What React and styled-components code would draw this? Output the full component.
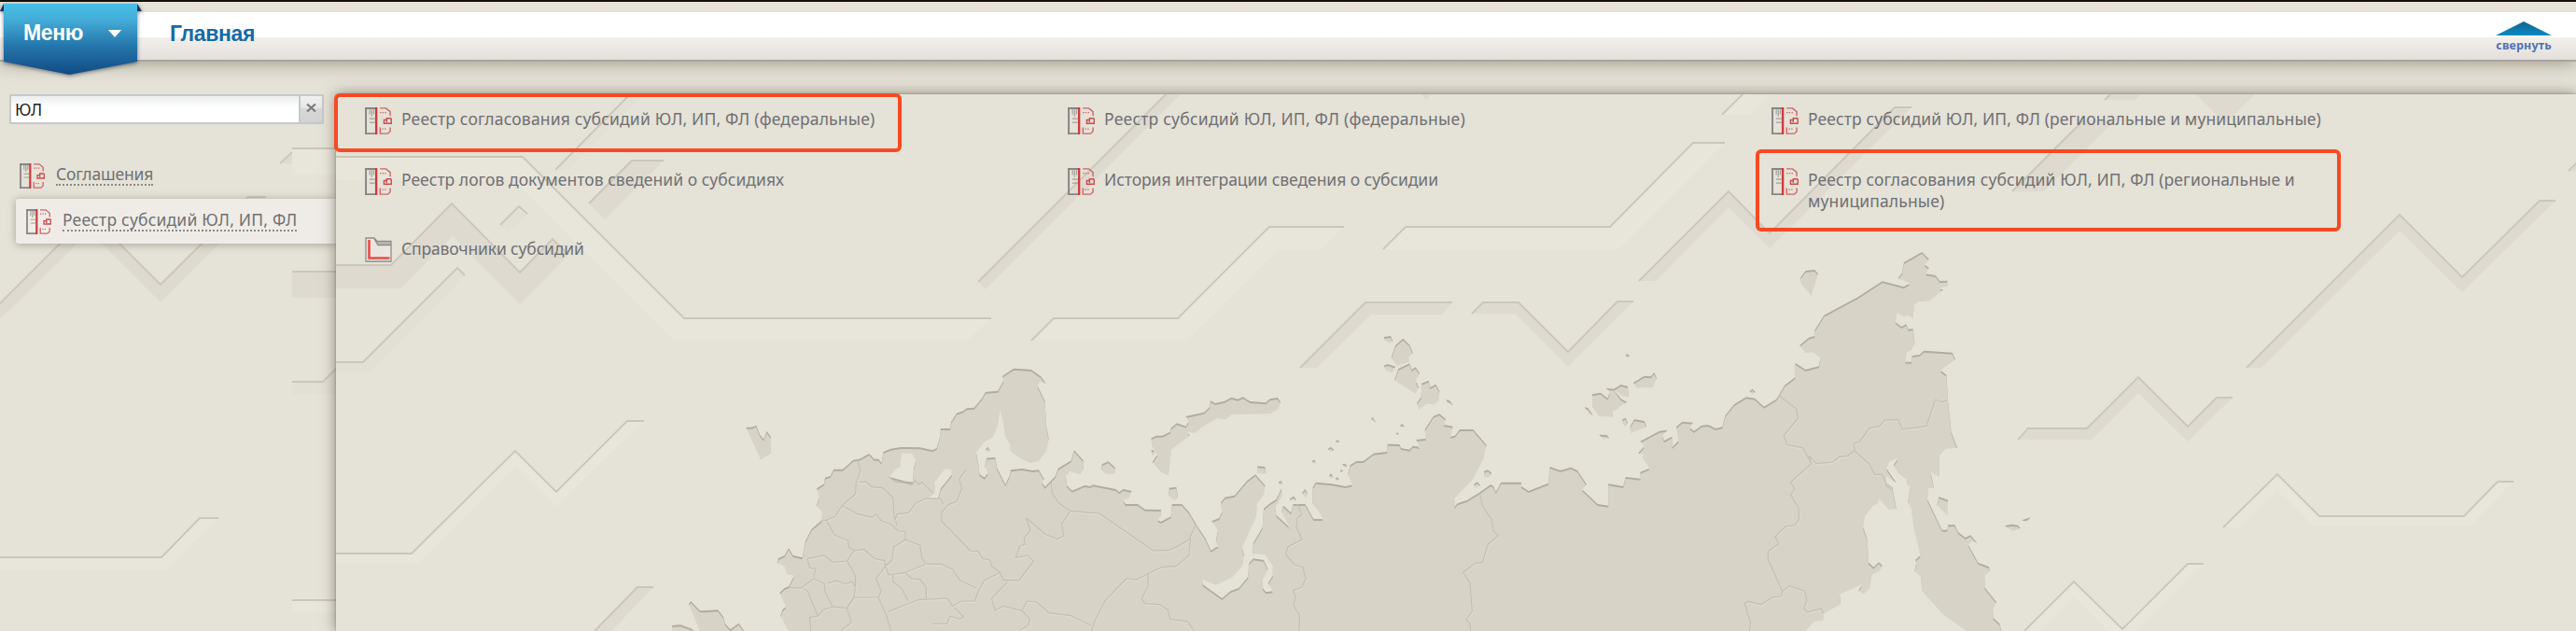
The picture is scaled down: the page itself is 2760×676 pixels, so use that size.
import React from "react";
import styled, { createGlobalStyle } from "styled-components";

const color = {
  page: "#e5e2d7",
  bandDark: "#dedad0",
  bandLight: "#e8e5da",
  line: "#cbc6ba",
  land: "#d7d3c7",
  text: "#6f7073",
  accent: "#f64a24",
  link: "#156ba5",
};

const GlobalStyle = createGlobalStyle`
  * { box-sizing: border-box; }
  html, body { margin: 0; background: ${color.page}; }
  body { overflow: hidden; }
`;

/* ---------- landscape data ---------- */

// Each map sheet has its own origin and horizontal/vertical scale.
const sheet = (x0, y0, sx, sy) => (points) =>
  points
    .trim()
    .split(/\s+/)
    .map((pair) => {
      const [x, y] = pair.split(",").map(Number);
      return `${(x0 + x / sx).toFixed(1)},${(y0 + y / sy).toFixed(1)}`;
    })
    .join(" ");

const west = sheet(700, 340, 2.24, 3);
const centre = sheet(1340, 340, 3, 3);
const east = sheet(1680, 240, 2.8, 3);

const mainland = [
  west(`325,1020 325,1008 305,960 310,940 318,930 303,885 315,870 325,865 338,830 320,825 315,800 297,790 300,775 315,765 325,742 335,765 358,772
    365,720 380,680 405,652 405,625 392,605 398,580 392,550 410,535 412,515 425,510 433,488 455,488 480,458 495,455 518,438
    530,455 540,455 548,468 552,432 570,422 595,417 640,418 670,427 680,420 688,385 690,357 712,357 715,335 728,308 745,300 752,292 770,290
    790,258 797,240 827,236 840,205 838,188 865,164 907,168 930,190 942,212 928,207 922,220 940,270 943,350 949,390
    943,430 925,462 905,468 880,452 858,432 855,405 845,385 840,340 832,295 826,350 815,385 795,400 775,435 780,470
    783,505 795,515 803,500 796,480 800,452 820,450 825,485 845,537 855,510 858,490 885,486 910,492 925,490 938,520
    933,530 940,545 965,510 972,485 1003,460 1010,427 1032,460 1032,488 1025,505 1000,495 990,510 992,540 1005,557
    1035,540 1048,543 1055,538 1110,552 1118,562 1128,552 1148,558 1142,580 1128,588 1133,600 1162,600 1180,617 1218,618
    1218,640 1210,650 1218,657 1242,640 1245,600 1268,600 1285,625 1303,665 1325,710 1338,750 1355,735 1350,720 1355,685
    1340,655 1358,645 1365,625 1362,595 1372,578 1395,572 1425,525 1445,505 1468,540 1465,570 1448,600 1447,640 1430,690
    1413,740 1418,765 1413,800 1390,835 1350,860 1318,842 1318,858 1365,903 1385,880 1405,870 1427,835 1430,790 1440,775
    1465,780 1475,810 1462,845 1462,870 1470,883 1487,880 1475,855 1487,830 1487,800 1468,763 1438,760 1440,725 1462,675
    1465,615 1480,598 1495,585 1508,550`),
  centre(`100,575 80,610 82,635 125,675 100,625 105,605 130,628 137,600 175,600 202,648 232,648 225,632 198,598 200,545 210,530 260,535
    305,543 327,538 313,505 320,475 340,462 362,462 395,437 438,432 440,407 478,408 483,420 510,425 522,413 543,417
    532,393 563,390 560,360 588,317 607,310 627,327 620,345 650,350 642,383 657,380 672,360 715,360 758,410 748,455
    715,520 655,582 655,610 665,598 695,588 735,563 772,537 780,543 788,562 805,530 870,530 870,543 893,558 957,533 962,480
    995,492 1030,482 1050,492 1080,537 1065,553 1115,600 1150,605 1150,535 1198,543 1205,513 1253,518 1252,497 1282,485
    1262,455 1262,440 1245,437 1265,415`),
  east(`217,698 275,665 298,662 283,680 288,697 312,683 313,717 332,697 325,652 343,635 375,638 365,655 378,665 388,658
    400,648 420,645 443,657 463,652 472,615 498,580 535,556 560,560 588,587 625,563 633,550 650,518 682,492 682,447
    713,468 753,457 757,430 735,412 713,415 695,390 722,365 740,360 740,342 768,293 870,235 943,184 1008,202 1025,190
    990,175 1003,155 1008,123 1062,90 1083,113 1070,130 1083,142 1073,160 1103,165 1115,183 1138,182 1138,200 1115,205
    1125,212 1085,247 1050,250 1038,262 1035,303 1020,293 1010,298 987,285 982,315 1000,330 1015,322 1020,338 1035,337 1040,385
    1030,405 1015,412 1012,443 1030,443 1033,423 1055,420 1068,407 1153,413 1162,435 1118,470 1135,485 1140,570 1150,670
    1168,720 1133,722 1115,745 1113,812 1088,797 1097,848 1080,850 1078,885 1122,983 1138,983 1140,967 1160,967 1170,990
    1192,1008 1208,1000 1228,1027 1215,1018 1200,1030 1230,1088 1263,1102 1265,1115 1250,1130 1250,1168 1285,1215 1275,1240
    1275,1265 1295,1285 1302,1320 1195,1320 1195,1308 1125,1255 1062,1180 1058,1135 1040,1115 1045,1090 1042,1080 1057,1065 1038,980 1030,915
    1020,895 1027,843 1017,840 1015,820 990,800 977,775 990,752 965,762 955,785 985,832 965,818 955,810 953,835 973,850 985,915 962,918 933,882 928,900 915,905 890,940
    885,975 897,1010 902,1088 917,1103 932,1087 943,1097 935,1115 912,1127 905,1170 887,1190 872,1178 882,1158 815,1190 818,1222
    768,1252 765,1275 740,1277 712,1308 712,1320`),
].join(" ");

const islands = [
  west("222,353 237,353 247,347 256,378 265,392 272,366 282,383 281,438 258,458"),
  west("1195,388 1208,380 1222,380 1240,368 1243,355 1257,340 1278,350 1285,335 1278,318 1322,305 1335,288 1337,268 1348,276 1370,270 1388,257 1403,263 1415,256 1432,270 1470,274 1480,262 1498,258 1505,272 1500,295 1480,310 1388,312 1375,328 1352,325 1318,352 1300,372 1283,368 1287,380 1243,425 1236,508 1218,498 1198,465 1210,440 1197,415"),
  west("1195,427 1203,427 1203,440 1197,445"),
  west("1077,472 1092,463 1108,482 1107,503 1085,503 1075,488"),
  west("797,425 803,416 808,428 803,433"),
  west("1238,548 1255,545 1259,580 1250,588 1237,572"),
  west("1450,478 1468,480 1470,503 1450,500"),
  west("1500,530 1506,525 1510,534 1505,539"),
  west("1526,588 1538,575 1542,588"),
  west("45,990 65,988 90,1000 110,1020 45,1020"),
  west("85,922 90,912 112,943 155,940 168,962 172,985 185,1003 205,983 218,1008 218,1020 115,1020 97,960"),
  centre("428,63 450,60 457,78 445,82 430,73"),
  centre("465,90 490,68 510,88 522,115 508,128 508,143 470,155 452,130"),
  centre("428,155 440,150 465,158 455,178 435,170"),
  centre("475,165 510,148 518,168 530,160 543,180 530,205 540,225 530,245 462,202"),
  centre("550,212 572,203 577,225 595,215 607,238 605,265 590,280 565,278 540,297 535,275 548,255"),
  centre("627,265 640,268 650,282 635,277"),
  centre("387,328 393,320 402,338"),
  centre("480,348 487,342 494,350 486,355"),
  centre("467,373 472,370 476,375 471,379"),
  centre("248,423 257,416 268,426 258,432"),
  centre("273,398 279,394 285,400 279,404"),
  centre("197,463 203,457 209,465 203,470"),
  centre("295,472 303,470 310,478 302,483"),
  centre("252,508 259,502 265,512 257,518"),
  centre("287,493 292,489 297,494 291,498"),
  centre("272,518 278,514 284,521 278,525"),
  centre("125,583 138,575 147,588"),
  centre("165,565 175,552 182,565 178,582"),
  centre("750,495 762,490 775,500 765,515 752,512"),
  centre("717,537 728,528 738,540 722,550"),
  centre("1205,122 1212,117 1218,125 1211,131"),
  centre("1230,210 1265,188 1287,190 1297,177 1305,195 1293,225 1240,227"),
  centre("1098,247 1125,242 1147,260 1155,240 1142,228 1168,230 1190,216 1212,222 1214,255 1195,253 1170,235 1190,262 1210,272 1190,285 1175,298 1163,300 1163,320 1120,318 1100,290"),
  centre("1073,288 1085,292 1100,315 1085,308"),
  centre("1195,328 1205,323 1212,340 1205,352 1196,342"),
  centre("1220,350 1233,328 1265,333 1272,352 1222,372"),
  centre("1120,377 1145,378 1152,388 1135,392"),
  east("698,172 713,150 740,147 750,160 730,230 700,193"),
  east("545,538 553,530 562,540 553,547"),
  east("1113,877 1140,887 1137,937 1107,903"),
  east("1310,970 1330,965 1350,968 1357,978 1335,987"),
  east("1362,952 1388,943 1375,958"),
];

const lakes = [
  west("595,437 620,437 630,460 625,487 623,530 605,527 567,513 580,490 592,480"),
  west("675,530 700,487 715,490 717,505 690,550 683,583 660,582 675,565"),
];

const borders = [
  west("490,455 497,495 487,530 485,568 453,605 437,640 415,652 405,652"),
  west("495,530 510,528 525,545 550,548 575,580 578,640 585,670"),
  west("453,605 490,632 525,643 535,633 548,655 570,665 588,687 605,688 605,715 577,738 573,780 557,800"),
  west("565,513 582,530 605,533 620,540 628,525 638,538 645,530 670,565"),
  west("750,490 735,520 740,552 728,592 708,602 692,628 692,655 760,750 780,752 790,775 808,780 812,800 832,820"),
  west("695,600 690,583 655,582 630,597 613,628 585,632 580,650"),
  west("415,652 435,700 467,718 470,740 482,750 465,783 430,787 410,765 370,775 375,805 390,808 385,835"),
  west("482,750 505,745 530,775 555,782 557,800 565,828 605,820 655,793 690,793 718,810 735,845 775,870"),
  west("605,715 640,733 645,775 655,793"),
  west("385,840 410,855 413,885 430,930 408,940 395,960 370,880 355,870 325,868"),
  west("385,840 355,870"),
  west("418,855 440,847 460,857 478,850 485,868 482,900 465,935 430,930"),
  west("465,783 485,830 485,868"),
  west("557,800 535,840 547,880 540,900 482,900 465,935 475,980 450,1008"),
  west("540,900 560,960 570,1008"),
  west("575,828 575,850 595,870 612,912"),
  west("605,822 620,840 640,842 655,870 655,903"),
  west("565,945 635,908 705,903 718,928 745,963 735,970 712,960 705,985 670,985"),
  west("718,928 740,912 772,912 780,880 795,845 832,820"),
  west("395,960 375,965 378,1008"),
  west("832,820 840,845 878,845 912,785 900,765 870,772 880,735 892,730 890,710 905,685 895,645 940,697 970,713 985,702 980,665 1000,625"),
  west("955,528 957,565 975,600 1000,622 1070,630 1200,750 1240,748 1260,735 1285,715 1303,665"),
  west("1290,710 1285,765 1255,800 1220,803 1190,822 1160,843 1135,840 1085,910 1060,975 1052,1008"),
  west("850,850 812,905 820,942 840,928 885,943 897,912 920,915 950,950 1000,958 1050,990"),
  west("1188,822 1187,865 1172,905 1180,920 1215,923 1235,940 1240,970 1283,978 1297,1008"),
  west("885,943 903,970 900,990 880,1005"),
  centre("150,600 165,635 150,645 147,675 165,715 120,737 113,762 140,795 168,803 177,840 165,867 137,878 145,903 137,925 158,960 155,1008"),
  centre("735,563 747,610 775,650 780,685 795,703 763,730 745,788 722,790 683,820 705,853 712,945 693,972 705,985 707,1008"),
  east("633,552 685,595 690,625 648,680 657,710 705,720 730,770 668,830 680,852 668,870 692,915 693,950 680,968 652,972 622,1005 632,1028 600,1052 600,1078 643,1180"),
  east("730,770 722,745 745,770 795,765 815,748 840,745 860,728 858,705 875,700 905,655 935,650 950,630 990,628 1003,660 1075,650 1102,565 1120,572 1140,567"),
  east("860,730 903,770 920,805 942,805 955,835 975,850"),
  east("530,1220 540,1213 580,1223 612,1200 640,1197 643,1180 665,1163 710,1180 717,1210 707,1235 718,1248 760,1235 765,1252"),
  east("530,1220 548,1280 545,1308"),
];

// crest: the engraved top edge; base: the lower edge, listed right to left.
const panelRidges = [
  { light: true, crest: "360,168 560,168 733,341 1062,341", base: "1036,365 722,365 550,193 360,193" },
  { crest: "360,284 419,284 484,218 557,292 592,256 609,273", base: "557,326 485,253 429,309 360,309" },
  { faint: true, crest: "536,241 556,221 565,229", base: "545,249" },
  { faint: true, crest: "360,388 389,388 490,287 498,295", base: "395,399 360,399" },
  { faint: true, crest: "595,182 675,101", base: "689,101 608,182" },
  { crest: "631,218 677,172 711,172", base: "648,235" },
  { crest: "1048,302 1249,101", base: "1265,101 1056,310" },
  { light: true, crest: "1105,365 1129,341 1262,341 1360,243 1440,243", base: "1416,267 1371,267 1272,365" },
  { light: true, crest: "1482,267 1506,243 1725,243 1814,153 1848,153", base: "1735,267" },
  { light: true, crest: "1845,123 1867,101", base: "1898,101 1875,123" },
  { crest: "1393,394 1463,324 1556,324", base: "1545,337 1469,337 1411,394" },
  { crest: "1577,336 1589,324 1627,324 1680,377 1733,323 1750,323", base: "1680,393 1623,336" },
  { crest: "1756,301 1852,205 1896,250 2030,115 2048,115", base: "1896,266 1852,222 1774,301" },
  { crest: "2156,205 2232,129", base: "2266,129 2190,205" },
  { crest: "2255,107 2261,101", base: "2294,101 2287,107" },
  { crest: "", base: "2353,101 2416,101 2384,132" },
  { crest: "", base: "1523,101 1534,101 1528,107" },
  { crest: "2407,394 2571,230 2638,297 2721,215 2738,215", base: "2638,313 2571,247 2423,394" },
  { crest: "2162,471 2173,459 2236,459 2291,404 2344,457 2375,426 2392,426", base: "2344,473 2291,421 2241,471" },
  { light: true, crest: "2382,565 2440,508 2485,553 2640,553 2676,516 2693,516", base: "2647,564 2479,564 2440,525 2400,565" },
  { light: true, crest: "2169,676 2222,623 2274,674 2344,604 2361,604", base: "2289,676 2260,676 2222,640 2186,676" },
  { crest: "2752,183 2762,173", base: "2762,183" },
  { light: true, crest: "360,593 441,593 552,483 596,527 672,451 690,451", base: "596,543 552,500 448,604 360,604" },
  { crest: "637,676 683,629 700,629", base: "655,676" },
];

const sidebarRidges = [
  { crest: "0,325 96,229 172,305 266,211 285,211", base: "172,324 96,248 0,342" },
  { crest: "300,175 313,163", base: "313,175" },
  { light: true, crest: "313,159 362,159", base: "362,187 313,187" },
  { crest: "313,291 362,291", base: "362,319 313,319" },
  { faint: true, crest: "313,409 346,409 362,393", base: "362,422 313,422" },
  { light: true, crest: "0,597 173,597 214,555 234,555", base: "180,610 0,610" },
  { light: true, crest: "313,643 362,643", base: "362,656 313,656" },
];

const ridgeFill = ({ light, faint }) =>
  light ? color.bandLight : faint ? "#e2dfd4" : color.bandDark;

const Ridges = ({ items }) =>
  items.map((ridge, i) => (
    <g key={i}>
      <polygon points={`${ridge.crest} ${ridge.base}`} fill={ridgeFill(ridge)} />
      {ridge.crest && (
        <polyline points={ridge.crest} fill="none" stroke={color.line} strokeWidth="1.8" />
      )}
    </g>
  ));

/* ---------- header ---------- */

const Page = styled.div`
  display: flex;
  flex-direction: column;
  width: 2760px;
  height: 676px;
  overflow: hidden;
  background: ${color.page};
  font-family: "Noto Sans", "Open Sans", sans-serif;
`;

const Header = styled.header`
  position: relative;
  z-index: 2;
  flex: none;
  display: flex;
  align-items: flex-start;
  height: 66px;
  border-top: 2px solid #12100e;
  background: linear-gradient(
    #e7e3d8 0, #e4e1d6 11px, #fff 11px, #fff 38px,
    #f3efeb 38px, #e3dfdb 62px, #a9a6a0 62px, #a9a6a0 64px
  );
  box-shadow: 0 2px 18px rgba(90, 84, 66, 0.5);
`;

const MenuButton = styled.button`
  position: relative;
  flex: none;
  display: flex;
  align-items: center;
  width: 152px;
  height: 78px;
  margin-top: 1px;
  padding: 0 0 13px 25px;
  border: 0;
  background: none;
  color: #fff;
  font: bold 23px "Liberation Sans", Arial, sans-serif;
  letter-spacing: -0.35px;
  text-align: left;
`;

const MenuShape = styled.svg`
  position: absolute;
  left: 0;
  top: 0;
  filter: drop-shadow(0 1px 2px rgba(30, 40, 60, 0.6));
`;

const MenuLabel = styled.span`
  position: relative;
  width: 91px;
`;

const Caret = styled.span`
  position: relative;
  border: 7px solid transparent;
  border-top: 8px solid #fff;
  border-bottom: 0;
`;

const PageTitle = styled.h1`
  margin: 20px 0 0 30px;
  color: ${color.link};
  font: bold 23px/28px "Liberation Sans", Arial, sans-serif;
  letter-spacing: -0.35px;
`;

const Collapse = styled.button`
  display: flex;
  flex-direction: column;
  align-items: center;
  gap: 3px;
  width: 62px;
  margin: 21px 25px 0 auto;
  padding: 0;
  border: 0;
  background: none;
  color: #4b73b4;
  font: bold 12.5px/16px "Noto Sans", sans-serif;
  letter-spacing: 0.15px;
`;

/* ---------- layout ---------- */

const Body = styled.div`
  flex: 1;
  display: grid;
  grid-template-columns: 360px 1fr;
`;

const Backdrop = styled.svg`
  position: absolute;
  left: 0;
  top: 0;
  display: block;
`;

const Sidebar = styled.aside`
  position: relative;
  padding-top: 35px;
`;

const SidebarContent = styled.div`
  position: relative;
`;

const Panel = styled.main`
  position: relative;
  margin-top: 35px;
  background: ${color.page};
  box-shadow: 0 0 14px rgba(70, 64, 46, 0.6), 0 0 2px rgba(70, 64, 46, 0.4);
`;

/* ---------- search ---------- */

const Search = styled.div`
  display: flex;
  width: 337px;
  height: 32px;
  margin-left: 10px;
  border: 2px solid #c6c8cb;
`;

const SearchInput = styled.input`
  flex: 1;
  min-width: 0;
  padding: 0 0 0 4px;
  border: 0;
  outline: 0;
  background: linear-gradient(#eceeef, #fff 12px);
  color: #222;
  font: 17.5px "Noto Sans", sans-serif;
  letter-spacing: -0.3px;
`;

const ClearButton = styled.button`
  display: flex;
  align-items: center;
  justify-content: center;
  width: 25px;
  padding: 0 0 3px;
  border: 0;
  border-left: 2px solid #c6c8cb;
  background: linear-gradient(#f1f1f1 0, #e6e6e6 45%, #d8d8d8 46%, #d2d2d2);
`;

/* ---------- navigation ---------- */

const Nav = styled.nav`
  margin-top: 31px;
`;

const NavItem = styled.a`
  display: flex;
  align-items: center;
  gap: 12px;
  height: ${(p) => (p.$active ? 48 : 49)}px;
  margin-left: ${(p) => (p.$active ? 17 : 10)}px;
  padding-left: 11px;
  border-radius: 3px 0 0 3px;
  background: ${(p) => (p.$active ? "#efece7" : "transparent")};
  box-shadow: ${(p) => (p.$active ? "0 1px 8px rgba(90, 84, 66, 0.45)" : "none")};
`;

const NavLabel = styled.span`
  margin-bottom: 4px;
  padding-top: 2px;
  border-bottom: 2px dotted #8b8a86;
  color: ${color.text};
  font-size: 17.5px;
  line-height: 21px;
  letter-spacing: ${(p) => p.$track}px;
`;

/* ---------- link grid ---------- */

const LinkGrid = styled.div`
  position: relative;
  display: grid;
  grid-template-columns: 753px 754px 1fr;
  grid-template-rows: 65px 74px auto;
  padding: 14px 0 0 31px;
`;

const LinkItem = styled.a`
  position: relative;
  display: flex;
  align-items: flex-start;
  gap: 10px;
`;

const LinkText = styled.span`
  padding-top: 1px;
  color: ${color.text};
  font-size: 17.5px;
  line-height: 23px;
  letter-spacing: ${(p) => p.$track}px;
  white-space: pre-line;
`;

const Highlight = styled.span`
  position: absolute;
  left: ${(p) => p.$left}px;
  top: ${(p) => p.$top}px;
  width: ${(p) => p.$width}px;
  height: ${(p) => p.$height}px;
  border: 4px solid ${color.accent};
  border-radius: 6px;
`;

/* ---------- icons ---------- */

const RegistryIcon = ({ size = 29 }) => (
  <svg width={size} height={size} viewBox="0 0 27 27" fill="none">
    <path d="M1 0V27M0 1H11M0 26.200H11" stroke="#868583" strokeWidth="1.8" />
    <path d="M4.800 2v5M6.800 2v7M8.800 2v5M4.500 11.300h5.500M4.500 15h5.500" stroke="#a09f9b" strokeWidth="1.1" />
    <path d="M11.3 0v27" stroke="#cf383f" strokeWidth="2.2" />
    <path d="M15 0.800h6l4.200 3.500v4.200" stroke="#cf6468" strokeWidth="1.3" />
    <path d="M15 5.200h6.500" stroke="#cf6468" strokeWidth="1.2" strokeDasharray="1.300 1.200" />
    <path d="M26.300 11h-4.600v4M26.300 11v5h-7.300v-3.400h2.500" stroke="#cb4a50" strokeWidth="1.3" />
    <path d="M15.200 20v6.200h7.600l2.400-2.200v-4" stroke="#cf6468" strokeWidth="1.3" />
    <path d="M17.200 21.500h5" stroke="#cf6468" strokeWidth="1.2" strokeDasharray="1.300 1.200" />
  </svg>
);

const FolderIcon = () => (
  <svg width="29" height="27" viewBox="0 0 29 27" fill="none">
    <path d="M1 1h9l4 7h14v18H1z" fill="#e9e7e0" />
    <path d="M10 1.5l3 3.5h15v4H14z" fill="#bbbab7" />
    <path d="M1 1h9l3 3.5h15V26H1zM10 2l4 6.5h14" stroke="#8f8e8b" strokeWidth="1.3" />
    <path d="M4.5 3v19.500h22" stroke="#ec4b49" strokeWidth="2.6" />
  </svg>
);

const ClearIcon = () => (
  <svg width="11" height="11" viewBox="0 0 11 11">
    <path d="M1 1.500l9 8M10 1.500l-9 8" stroke="#7b7b7b" strokeWidth="2.300" />
  </svg>
);

/* ---------- content ---------- */

const links = [
  {
    text: "Реестр согласования субсидий ЮЛ, ИП, ФЛ (федеральные)",
    track: 0.17,
    mark: [-33, -15, 608, 63],
  },
  { text: "Реестр субсидий ЮЛ, ИП, ФЛ (федеральные)", track: 0.23 },
  { text: "Реестр субсидий ЮЛ, ИП, ФЛ (региональные и муниципальные)", track: 0.11 },
  { text: "Реестр логов документов сведений о субсидиях", track: 0.03 },
  { text: "История интеграции сведения о субсидии", track: -0.05 },
  {
    text: "Реестр согласования субсидий ЮЛ, ИП, ФЛ (региональные и\nмуниципальные)",
    track: 0.12,
    mark: [-17, -20, 627, 88],
  },
  { text: "Справочники субсидий", track: -0.15, folder: true },
];

const PanelBackdrop = () => (
  <Backdrop width="2400" height="575" viewBox="360 101 2400 575">
    <defs>
      <filter id="carved" x="0" y="0" width="2760" height="700" filterUnits="userSpaceOnUse">
        <feOffset in="SourceAlpha" dx="0.3" dy="2" result="moved" />
        <feGaussianBlur in="moved" stdDeviation="0.7" result="soft" />
        <feComposite in="SourceAlpha" in2="soft" operator="out" result="edge" />
        <feFlood floodColor="#a9a494" floodOpacity="0.85" />
        <feComposite in2="edge" operator="in" result="shade" />
        <feMerge>
          <feMergeNode in="SourceGraphic" />
          <feMergeNode in="shade" />
        </feMerge>
      </filter>
      <mask id="water" x="0" y="0" width="2760" height="700" maskUnits="userSpaceOnUse">
        <rect width="2760" height="700" fill="#fff" />
        {lakes.map((points, i) => (
          <polygon key={i} points={points} fill="#000" />
        ))}
      </mask>
    </defs>
    <Ridges items={panelRidges} />
    <g filter="url(#carved)">
      <g mask="url(#water)" fill={color.land}>
        <polygon points={mainland} />
        {islands.map((points, i) => (
          <polygon key={i} points={points} />
        ))}
      </g>
    </g>
    <g fill="none" strokeWidth="1.2" strokeLinejoin="round">
      {borders.map((points, i) => (
        <g key={i}>
          <polyline points={points} stroke="#dedbd0" transform="translate(0.4 1.3)" />
          <polyline points={points} stroke="#c4bfb1" />
        </g>
      ))}
    </g>
  </Backdrop>
);

export default function App() {
  return (
    <Page>
      <GlobalStyle />
      <Header>
        <MenuButton>
          <MenuShape width="152" height="80" viewBox="0 3 152 80">
            <defs>
              <linearGradient id="menuFill" x1="0" y1="0" x2="0" y2="1">
                <stop offset="0" stopColor="#49c1e8" />
                <stop offset="0.25" stopColor="#42a9d6" />
                <stop offset="0.6" stopColor="#2475ab" />
                <stop offset="1" stopColor="#114b84" />
              </linearGradient>
            </defs>
            <path d="M0 12L4 4v8zM147 4l5 8h-5z" fill="#17335c" />
            <path d="M4 4h143v62L74.500 80 4 66z" fill="url(#menuFill)" />
          </MenuShape>
          <MenuLabel>Меню</MenuLabel>
          <Caret />
        </MenuButton>
        <PageTitle>Главная</PageTitle>
        <Collapse>
          <svg width="60" height="15" viewBox="0 0 60 15">
            <defs>
              <linearGradient id="collapseFill" x1="0" y1="0" x2="0" y2="1">
                <stop offset="0" stopColor="#0b6690" />
                <stop offset="1" stopColor="#0f88c2" />
              </linearGradient>
            </defs>
            <path d="M30 0l30 15H0z" fill="url(#collapseFill)" />
          </svg>
          свернуть
        </Collapse>
      </Header>
      <Body>
        <Sidebar>
          <Backdrop width="360" height="610" viewBox="0 66 360 610">
            <Ridges items={sidebarRidges} />
          </Backdrop>
          <SidebarContent>
            <Search>
              <SearchInput defaultValue="ЮЛ" />
              <ClearButton>
                <ClearIcon />
              </ClearButton>
            </Search>
            <Nav>
              <NavItem>
                <RegistryIcon size={27} />
                <NavLabel $track={-0.15}>Соглашения</NavLabel>
              </NavItem>
              <NavItem $active>
                <RegistryIcon size={27} />
                <NavLabel $track={0.2}>Реестр субсидий ЮЛ, ИП, ФЛ</NavLabel>
              </NavItem>
            </Nav>
          </SidebarContent>
        </Sidebar>
        <Panel>
          <PanelBackdrop />
          <LinkGrid>
            {links.map(({ text, track, mark, folder }) => (
              <LinkItem key={text}>
                {folder ? <FolderIcon /> : <RegistryIcon />}
                <LinkText $track={track}>{text}</LinkText>
                {mark && (
                  <Highlight $left={mark[0]} $top={mark[1]} $width={mark[2]} $height={mark[3]} />
                )}
              </LinkItem>
            ))}
          </LinkGrid>
        </Panel>
      </Body>
    </Page>
  );
}
